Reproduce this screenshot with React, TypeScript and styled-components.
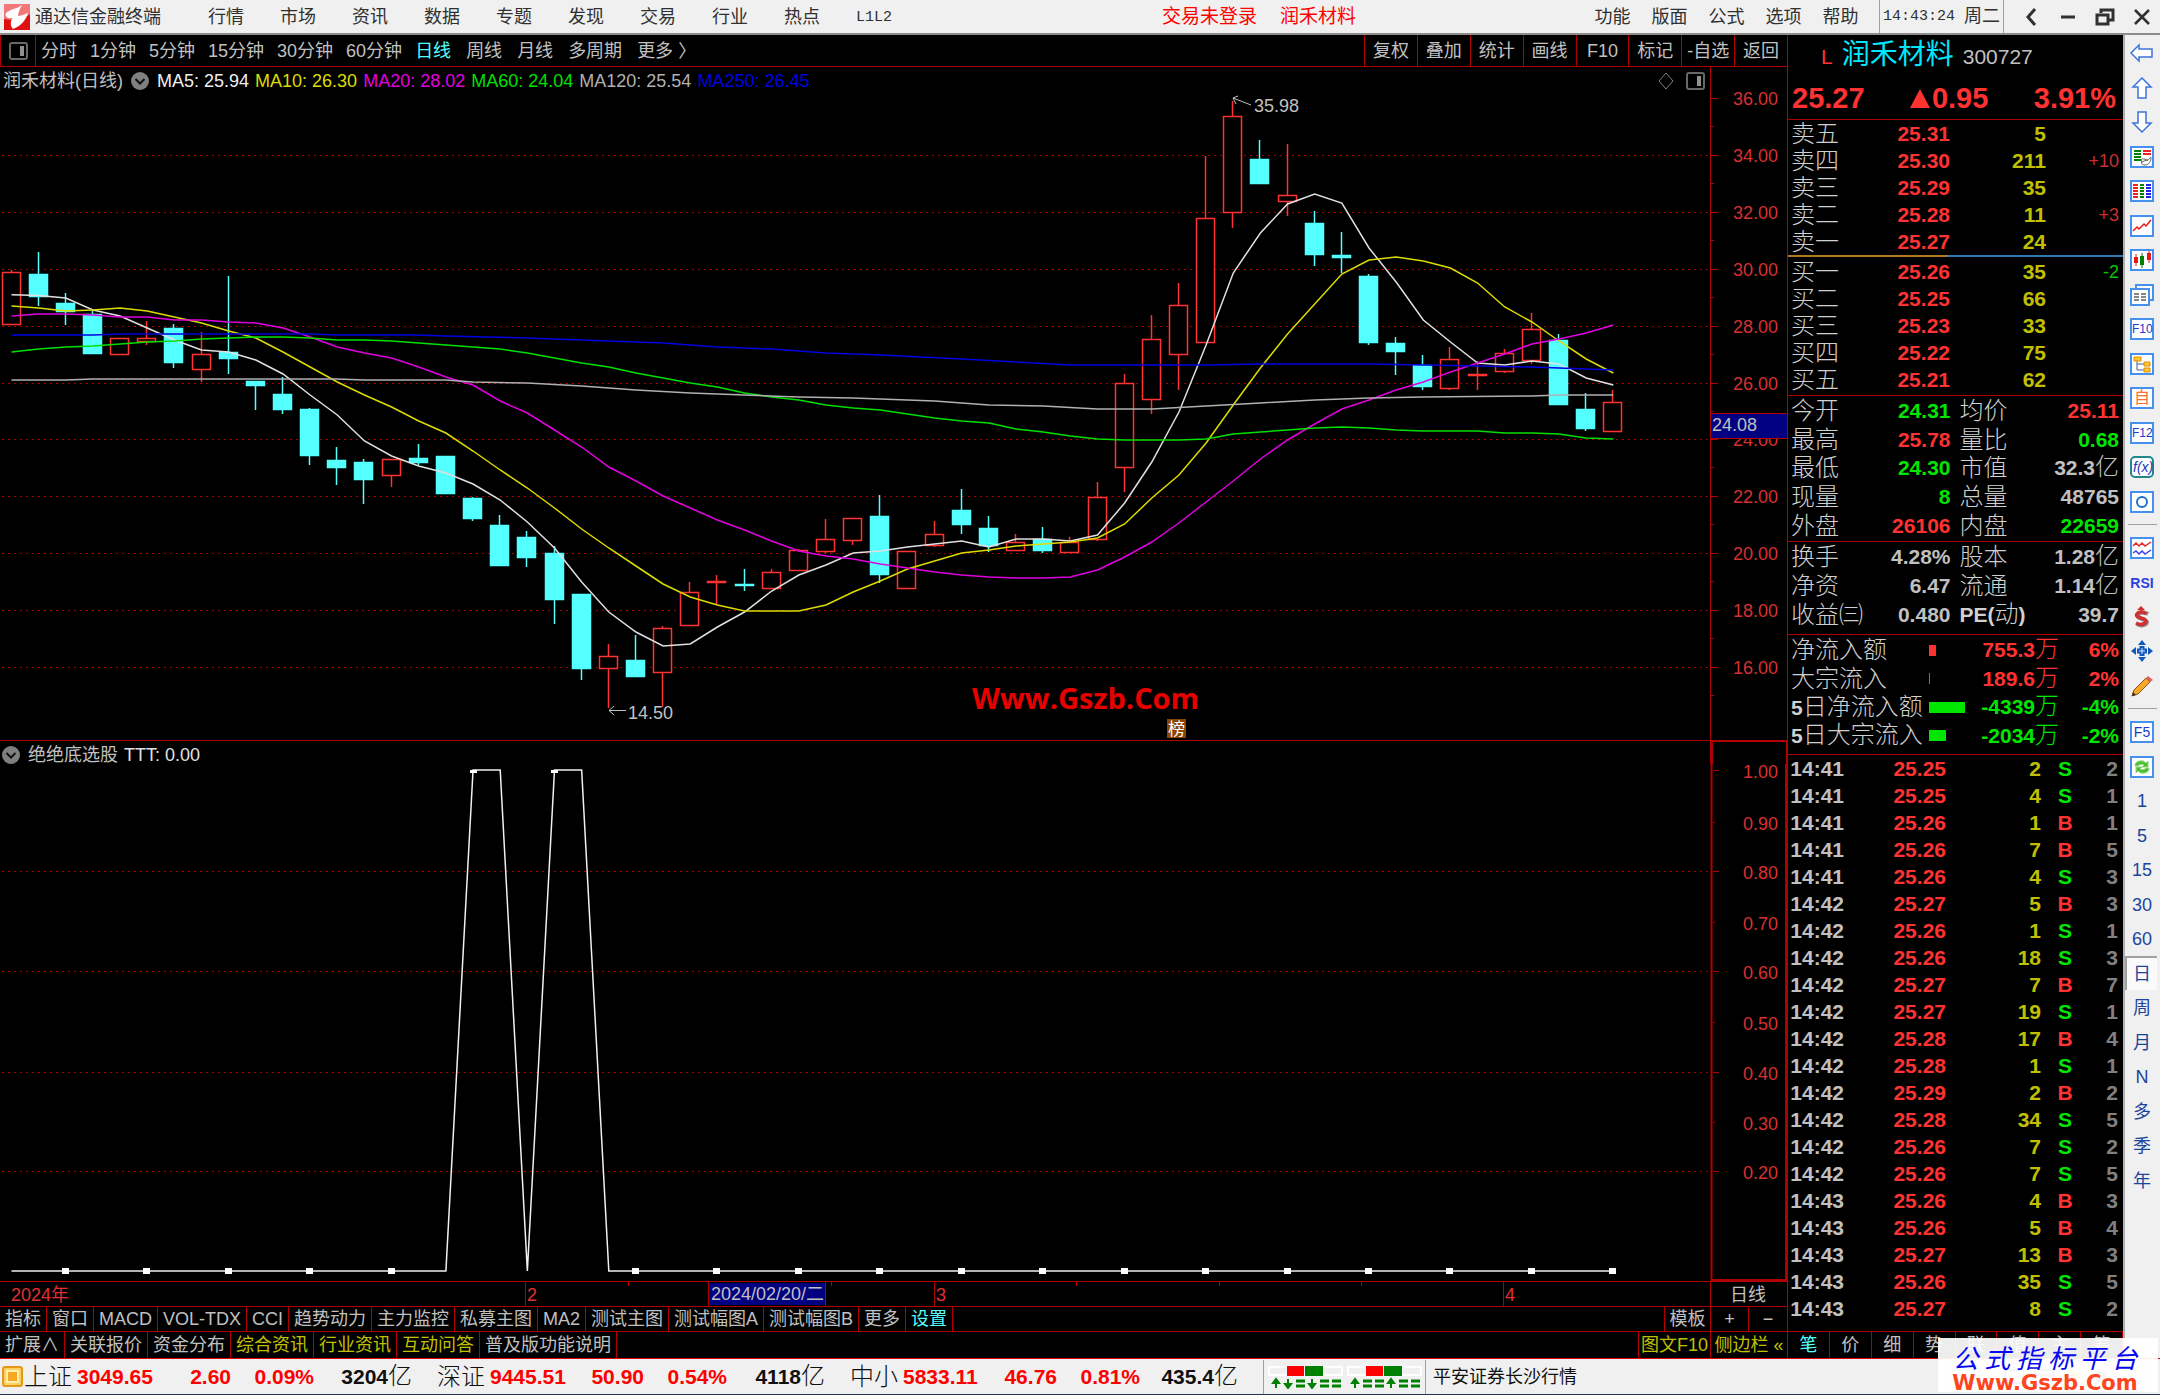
import React from "react";
import styled, { createGlobalStyle } from "styled-components";

const RED = "#b00000";
const UP = "#ff3232";
const DOWN = "#00e600";
const GRAY = "#c0c0c0";
const YELLOW = "#c0c000";
const CYAN = "#54ffff";
const SANS = '"Liberation Sans", "Noto Sans CJK SC", sans-serif';

const Global = createGlobalStyle`
  * { box-sizing: border-box; }
  body { margin: 0; background: #f0f0f0; font-family: ${SANS}; font-size: 18px; font-weight: 400; line-height: 24px; }
  button { font: inherit; color: inherit; background: none; border: 0; padding: 0; margin: 0; white-space: nowrap; cursor: pointer; }
  table { border-collapse: collapse; table-layout: fixed; width: 100%; }
  td, th { padding: 0; font-weight: inherit; }
  dl, dd, dt { margin: 0; }
  svg { display: block; }
  svg text { font-family: ${SANS}; font-size: 18px; }
`;

const Page = styled.div`
  position: relative;
  min-height: 100vh;
  display: flex;
  flex-direction: column;
  border-bottom: 1px solid #203448;
`;

/* ---------- menu bar ---------- */
const MenuBar = styled.header`
  display: flex;
  align-items: center;
  height: 35px;
  background: #f0f0f0;
  border-bottom: 2px solid #8c8c8c;
  color: #303030;
`;
const Brand = styled.div`
  display: flex;
  align-items: center;
  gap: 5px;
  width: 190px;
  padding-left: 4px;
`;
const MenuItem = styled.button<{ $w: number }>`
  width: ${(p) => p.$w}px;
`;
const Mono = styled.span`
  font-family: "Liberation Mono", monospace;
  font-size: 15px;
`;
const Alerts = styled.div`
  display: flex;
  gap: 23px;
  margin-left: 252px;
  margin-right: auto;
  color: #ff0000;
  font-size: 19px;
`;
const Clock = styled.time`
  display: flex;
  gap: 9px;
  height: 33px;
  line-height: 33px;
  width: 125px;
  padding-left: 3px;
  border: solid #a0a0a0;
  border-width: 0 1px;
  margin-left: 10px;
`;
const WinButtons = styled.div`
  display: flex;
  width: 156px;
  padding-left: 8px;
`;
const WinButton = styled.button`
  display: grid;
  place-items: center;
  width: 37px;
  height: 32px;
`;

/* ---------- body ---------- */
const Body = styled.main`
  display: grid;
  grid-template-columns: minmax(0, 1fr) 335px 37px;
  flex: 1;
`;
const Left = styled.section`
  display: flex;
  flex-direction: column;
  background: #000;
  color: ${GRAY};
  border-right: 1px solid ${RED};
  min-width: 0;
`;
const ToolRow = styled.nav`
  display: flex;
  align-items: center;
  height: 32px;
  border-bottom: 1px solid ${RED};
  border-left: 1px solid ${RED};
`;
const PanelToggle = styled.button`
  display: grid;
  place-items: center;
  width: 35px;
  height: 31px;
  border-right: 1px solid ${RED};
`;
const Periods = styled.div<{ $gap: number; $left: number }>`
  display: flex;
  gap: ${(p) => p.$gap}px;
  margin-left: ${(p) => p.$left}px;
`;
const Period = styled.button<{ $on?: boolean }>`
  color: ${(p) => (p.$on ? CYAN : GRAY)};
`;
const Actions = styled.div`
  display: grid;
  grid-template-columns: repeat(8, 1fr);
  width: 423px;
  height: 31px;
  margin-left: auto;
`;
const Action = styled.button`
  border-left: 1px solid ${RED};
`;
const InfoRow = styled.div<{ $thick?: boolean }>`
  display: flex;
  height: ${(p) => (p.$thick ? 24 : 23)}px;
  border-top: ${(p) => (p.$thick ? `1px solid ${RED}` : "0")};
`;
const Info = styled.div<{ $left: number }>`
  flex: 1;
  display: flex;
  align-items: center;
  gap: 6px;
  padding: 4px 5px 0 ${(p) => p.$left}px;
  white-space: nowrap;
`;
const Dropdown = styled.button`
  margin: 0 2px;
`;
const Ink = styled.span<{ $c: string }>`
  color: ${(p) => p.$c};
`;
const InfoIcons = styled.div`
  display: flex;
  gap: 12px;
  margin-left: auto;
`;
const AxisHead = styled.div<{ $thick?: boolean }>`
  width: 77px;
  border: solid ${RED};
  border-width: ${(p) => (p.$thick ? "1px 1px 0 3px" : "0 0 0 1px")};
`;
const Drawing = styled.svg`
  width: 100%;
  height: auto;
  overflow: visible;
`;
const TabRow = styled.nav<{ $h: number }>`
  display: flex;
  height: ${(p) => p.$h}px;
  border-top: 1px solid ${RED};
`;
const Tab = styled.button<{ $c?: string }>`
  padding: 0 5px;
  border-right: 1px solid ${RED};
  color: ${(p) => p.$c || GRAY};
`;
const TabEnd = styled.div<{ $cols: string }>`
  display: grid;
  grid-template-columns: ${(p) => p.$cols};
  margin-left: auto;
`;
const EndTab = styled.button<{ $c?: string }>`
  border-left: 1px solid ${RED};
  color: ${(p) => p.$c || GRAY};
`;

/* ---------- quote panel ---------- */
const Quote = styled.aside`
  display: flex;
  flex-direction: column;
  background: #000;
  color: ${GRAY};
  font-size: 21px;
`;
const QuoteHead = styled.div`
  height: 85px;
  border-bottom: 1px solid ${RED};
`;
const NameRow = styled.h1`
  display: flex;
  align-items: baseline;
  gap: 9px;
  height: 40px;
  margin: 0;
  padding-left: 33px;
  font-size: 21px;
  font-weight: 400;
  line-height: 40px;
`;
const Flag = styled.span`
  color: ${UP};
`;
const Name = styled.span`
  color: #00e6ff;
  font-size: 28px;
`;
const PriceRow = styled.div`
  display: flex;
  justify-content: space-between;
  padding: 11px 7px 0 4px;
  color: ${UP};
  font-size: 29px;
  font-weight: 700;
`;
const Change = styled.span`
  display: flex;
  align-items: center;
  gap: 2px;
`;
const Cell = styled.td<{ $c?: string; $pad?: number; $small?: boolean; $align?: string }>`
  height: 27px;
  line-height: 26px;
  text-align: ${(p) => p.$align || "right"};
  color: ${(p) => p.$c || GRAY};
  padding-right: ${(p) => p.$pad || 0}px;
  font-size: ${(p) => (p.$small ? 18 : 21)}px;
  font-weight: ${(p) => (p.$small ? 400 : 700)};
`;
const LevelName = styled.th`
  height: 27px;
  line-height: 26px;
  padding-left: 3px;
  text-align: left;
  font-size: 24px;
  font-weight: 300;
  color: #d0d0d0;
`;
const Split = styled.div`
  display: grid;
  grid-template-columns: 160px 1fr;
  height: 2px;
  margin-bottom: 1px;
  background: #2c78b4;
  &::before { content: ""; background: #b07820; }
`;
const BookEnd = styled.div`
  height: 3px;
  border-bottom: 1px solid ${RED};
`;
const Sheet = styled.div<{ $rows: number; $h: number; $bottom: number }>`
  display: grid;
  grid-template-rows: repeat(${(p) => p.$rows}, 1fr);
  height: ${(p) => p.$h}px;
  padding: 1px 4px ${(p) => p.$bottom}px 3px;
  border-bottom: 1px solid ${RED};
`;
const SheetRow = styled.dl`
  display: grid;
  grid-template-columns: 1fr 1fr;
  gap: 9px;
  align-items: center;
`;
const Pair = styled.div`
  display: flex;
  justify-content: space-between;
  align-items: center;
  white-space: nowrap;
`;
const Label = styled.dt`
  font-size: 24px;
  font-weight: 300;
  color: #d0d0d0;
`;
const Value = styled.dd<{ $c?: string }>`
  color: ${(p) => p.$c || GRAY};
  font-weight: 700;
`;
const Unit = styled.span`
  font-size: 24px;
  font-weight: 300;
  line-height: 0;
`;
const Digit = styled.span`
  font-size: 21px;
  font-weight: 700;
`;
const FlowRow = styled.dl`
  display: grid;
  grid-template-columns: 138px 36px 1fr 60px;
  align-items: center;
  white-space: nowrap;
`;
const FlowBar = styled.dd<{ $c: string }>`
  height: 11px;
  background: ${(p) => p.$c};
`;
const FlowValue = styled(Value)`
  text-align: right;
`;
const TickTabs = styled.nav`
  display: grid;
  grid-template-columns: repeat(8, 1fr);
  height: 27px;
  margin-top: auto;
  border-top: 1px solid ${RED};
  font-size: 18px;
`;
const TickTab = styled.button<{ $on?: boolean }>`
  border-right: 1px solid ${RED};
  color: ${(p) => (p.$on ? CYAN : GRAY)};
`;

/* ---------- tool strip ---------- */
const Strip = styled.nav`
  background: #f0f0f0;
  border-left: 2px solid #b0b0b0;
  color: #1c449c;
`;
const StripGroup = styled.div<{ $h: number }>`
  display: grid;
  grid-auto-rows: 1fr;
  height: ${(p) => p.$h}px;
`;
const StripButton = styled.button<{ $on?: boolean }>`
  display: grid;
  place-items: center;
  margin: 0 3px 0 0;
  background: ${(p) => (p.$on ? "#fafafa" : "none")};
  border: solid ${(p) => (p.$on ? "#a0a0a0" : "transparent")};
  border-width: 2px 0 0 2px;
`;
const StripLine = styled.hr`
  height: 12px;
  margin: 0 3px;
  border: 0;
  background: linear-gradient(#a0a0a0, #a0a0a0) center / 100% 1px no-repeat;
`;
const Boxed = styled.span<{ $c?: string; $size?: number }>`
  display: grid;
  place-items: center;
  width: 24px;
  height: 22px;
  border: 2px solid #4690f0;
  background: #fff;
  color: ${(p) => p.$c || "#2038d0"};
  font-size: ${(p) => p.$size || 12}px;
  line-height: 16px;
`;
const Rsi = styled.b`
  font-size: 14px;
  color: #2c40e0;
`;

/* ---------- status bar ---------- */
const Status = styled.footer`
  display: flex;
  align-items: center;
  height: 36px;
  border-top: 1px solid #e00000;
  background: #f0f0f0;
  color: #101010;
  padding-left: 2px;
`;
const Index = styled.div`
  display: grid;
  grid-template-columns: 53px 80px 74px 83px 98px;
  align-items: center;
  width: 413px;
  font-size: 21px;
  font-weight: 700;
  text-align: right;
  white-space: nowrap;
`;
const IndexName = styled.span`
  font-size: 24px;
  font-weight: 300;
  text-align: left;
`;
const IndexValue = styled.span`
  color: #ff0000;
  text-align: left;
`;
const Signals = styled.div`
  display: flex;
  align-items: center;
  gap: 2px;
  height: 34px;
  width: 163px;
  padding-left: 3px;
  margin-right: 7px;
  border: solid #a0a0a0;
  border-width: 0 1px;
`;
const Tray = styled.div`
  display: flex;
  gap: 10px;
  margin-left: auto;
  padding-right: 50px;
`;
const Stamp = styled.div`
  position: absolute;
  right: 2px;
  bottom: 2px;
  width: 220px;
  height: 54px;
  padding-right: 6px;
  background: rgba(255, 255, 255, 0.93);
  text-align: center;
  white-space: nowrap;
`;
const StampTitle = styled.div`
  height: 34px;
  line-height: 38px;
  font-family: "Noto Sans CJK SC", sans-serif;
  font-size: 26px;
  font-style: italic;
  color: #0808f0;
`;
const StampUrl = styled.div`
  height: 20px;
  line-height: 22px;
  font-family: "DejaVu Sans", sans-serif;
  font-size: 21px;
  font-weight: 700;
  color: #ff4420;
`;

/* ---------- chart data: [rising, bodyTop, bodyBottom, high, low] ---------- */
const candles: number[][] = [
  [1,272,325,270,325],[0,274,297,252,306],[0,303,312,293,325],[0,314,354,311,354],[1,338,355,338,355],[1,338,342,321,345],
  [0,328,363,324,368],[1,354,370,332,382],[0,352,359,276,374],[0,381,386,381,410],[0,394,410,377,414],[0,409,456,408,465],
  [0,460,468,447,485],[0,462,480,459,504],[1,459,476,459,487],[0,458,463,444,465],[0,456,494,456,494],[0,498,519,497,521],
  [0,525,566,515,566],[0,537,558,531,567],[0,553,600,546,624],[0,594,669,594,680],[1,656,669,644,708],[0,660,677,635,677],
  [1,628,673,626,707],[1,592,626,582,626],[1,581,583,575,604],[0,584,586,569,591],[1,572,589,569,589],[1,550,571,549,571],
  [1,539,552,519,553],[1,518,541,518,545],[0,516,575,495,583],[1,551,589,551,589],[1,534,546,521,547],[0,510,525,489,534],
  [0,528,546,516,552],[1,542,551,534,551],[0,539,551,527,553],[1,542,553,537,553],[1,497,540,482,541],[1,383,468,374,492],
  [1,339,400,315,414],[1,305,355,283,390],[1,218,343,156,343],[1,116,213,101,228],[0,159,184,140,184],[1,195,202,144,216],
  [0,223,255,211,266],[0,255,258,232,273],[0,276,343,274,345],[0,343,352,337,375],[0,365,387,355,390],[1,359,389,347,390],
  [1,374,375,361,390],[1,353,372,349,373],[1,329,361,313,364],[0,340,405,334,405],[0,409,429,393,431],[1,402,432,390,432],
];
const px = (i: number) => 11.5 + 27.15 * i;

const ma5 = [294.7,295.5,298,310,316,328,340,350,352,360,374,395,415,441,456,466,473,484,500,522,548,582,612,632,646,644,627,612,591,575,565,553,551,547,544,541,547,539,539,541,535,503,462,412,345,273,233,204,194,203,248,282,320,342,363,365,361,364,378,385];
const ma10 = [306,308,311,310,308,311,317,323,331,338,352,367,382,395,407,421,433,451,470,488,508,529,548,566,584,597,605,611,611,611,605,592,581,569,561,553,550,546,544,542,538,524,498,475,443,405,368,334,304,274,260,257,261,268,283,307,322,341,359,373];
const ma20 = [316,314,314,315,317,317,320,320,322,323,328,337,347,353,358,367,377,385,401,413,430,447,467,481,496,508,520,530,541,551,556,559,564,568,572,575,577,578,578,577,570,557,542,523,502,481,459,440,424,409,400,390,382,372,363,354,344,339,333,325];
const ma60 = [352,349,347,346,344,342,341,339,338,337,337,338,340,340,341,343,345,347,349,353,358,363,367,373,378,383,387,393,397,400,405,408,410,414,418,421,423,429,432,436,439,440,440,440,439,434,432,430,428,427,428,430,431,431,431,433,433,434,438,439];
const ma120: number[][] = [[0,380],[2,380],[3,379],[12,379],[13,380],[16,380],[17,382],[19,383],[21,386],[23,390],[25,393],[27,395],[29,397],[31,398],[34,401],[36,405],[38,406],[40,409],[42,409],[44,406],[46,403],[48,400],[50,398],[52,397],[56,396],[57,395],[59,395]];
const ma250: number[][] = [[0,335],[3,335],[4,334],[11,334],[12,335],[15,335],[16,336],[19,338],[21,340],[24,343],[26,347],[28,349],[30,353],[32,355],[35,359],[37,362],[39,365],[44,365],[46,364],[50,364],[52,365],[54,366],[56,367],[58,369],[59,370]];

const curve = (pts: number[][]) => pts.map(([i, y]) => `${px(i)},${y}`).join(" ");
const dense = (ys: number[]) => ys.map((y, i) => [i, y]);
const Curve = ({ pts, c }: { pts: number[][]; c: string }) => (
  <polyline points={curve(pts)} fill="none" stroke={c} strokeWidth="1.5" />
);

const priceTicks = [36, 34, 32, 30, 28, 26, 24, 22, 20, 18, 16].map((p, i) => ({ p, y: Math.round(98 + i * 56.9) }));

const PriceChart = () => (
  <Drawing viewBox="0 90 1787 650">
    {priceTicks.map(({ p, y }) => (
      <g key={p}>
        {p < 36 && <line x1="2" x2="1710" y1={y + 0.5} y2={y + 0.5} stroke="#a80000" strokeDasharray="2 4" />}
        <line x1="1710" x2="1718" y1={y + 0.5} y2={y + 0.5} stroke={RED} />
        <line x1="1710" x2="1714" y1={y + 28.5} y2={y + 28.5} stroke={RED} />
        <text x="1778" y={y + 7} textAnchor="end" fill="#d83030">{p.toFixed(2)}</text>
      </g>
    ))}
    <line x1="1710.5" x2="1710.5" y1="90" y2="740" stroke={RED} />
    {candles.map(([up, top, bottom, high, low], i) => {
      const x = Math.round(px(i));
      return (
        <g key={i} stroke={up ? UP : CYAN}>
          <line x1={x - 0.5} x2={x - 0.5} y1={high} y2={low} strokeWidth="1.5" />
          <rect x={x - 9.5} y={top + 0.5} width="18" height={Math.max(bottom - top - 1, 1)} fill={up ? (bottom - top < 3 ? UP : "#000") : CYAN} strokeWidth="1.5" />
        </g>
      );
    })}
    <Curve pts={dense(ma5)} c="#e0e0e0" />
    <Curve pts={dense(ma10)} c="#dcdc00" />
    <Curve pts={dense(ma20)} c="#e000e0" />
    <Curve pts={dense(ma60)} c="#00e000" />
    <Curve pts={ma120} c="#b0b0b0" />
    <Curve pts={ma250} c="#0000e0" />
    <g stroke={GRAY} fill="none">
      <path d="M1251 105 1233 98M1238 96 1233 98 1236 104" />
      <path d="M626 710.5H609M614 706 609 710.5 614 715" />
    </g>
    <text x="1254" y="112" fill={GRAY}>35.98</text>
    <text x="628" y="719" fill={GRAY}>14.50</text>
    <text x="972" y="709" fill="#e60000" style={{ fontFamily: '"Open Sans"', fontWeight: 700, fontSize: 29 }}>Www.Gszb.Com</text>
    <rect x="1167" y="719" width="19" height="19" fill="#884400" />
    <text x="1168" y="735" fill="#fff" style={{ fontSize: 17 }}>榜</text>
    <rect x="1711" y="413" width="76" height="25" fill="#000080" />
    <path d="M1711 413.5h76M1711 438.5h76" stroke={RED} />
    <text x="1712" y="431" fill={GRAY}>24.08</text>
  </Drawing>
);

const subTicks = [[1, 770], [0.9, 822], [0.8, 871], [0.7, 922], [0.6, 971], [0.5, 1022], [0.4, 1072], [0.3, 1122], [0.2, 1171]];
const marks = [2, 5, 8, 11, 14, 23, 26, 29, 32, 35, 38, 41, 44, 47, 50, 53, 56, 59];
const signal = [[0, 1271], [16, 1271], [17, 770], [18, 770], [19, 1271], [20, 770], [21, 770], [22, 1271], [59, 1271]];

const IndicatorChart = () => (
  <Drawing viewBox="0 764 1787 517">
    {subTicks.map(([v, y], i) => (
      <g key={v}>
        {i > 0 && i % 2 === 0 && <line x1="2" x2="1710" y1={y + 0.5} y2={y + 0.5} stroke="#a80000" strokeDasharray="2 4" />}
        <line x1="1713" x2={i % 2 ? 1715 : 1719} y1={y + 0.5} y2={y + 0.5} stroke={RED} />
        <text x="1778" y={y + 8} textAnchor="end" fill="#d83030">{v.toFixed(2)}</text>
      </g>
    ))}
    <path d="M1711.5 764V1280H1786V764" fill="none" stroke={RED} strokeWidth="2" />
    <Curve pts={signal} c="#f0f0f0" />
    {marks.map((i) => <rect key={i} x={Math.round(px(i)) - 4} y="1268" width="7" height="6" fill="#fff" />)}
    <path d="M470 770h7v3h-7zM551 770h7v3h-7z" fill="#fff" />
  </Drawing>
);

const DateAxis = () => (
  <Drawing viewBox="0 1281 1787 25">
    <path d="M0 1281.5H1787M525.5 1282V1306M934.5 1282V1306M1503.5 1282V1306M1710.5 1282V1306M628.5 1282v4M831.5 1282v4M1076.5 1282v4M1219.5 1282v4M1361.5 1282v4" stroke={RED} />
    <rect x="709" y="1283" width="116" height="22" fill="#000080" />
    <path d="M708.5 1282V1306M825.5 1282V1306" stroke={RED} />
    <g fill="#e03030">
      <text x="11" y="1301">2024年</text>
      <text x="527" y="1301">2</text>
      <text x="936" y="1301">3</text>
      <text x="1505" y="1301">4</text>
    </g>
    <text x="711" y="1300" fill={GRAY}>2024/02/20/二</text>
    <text x="1730" y="1301" fill={GRAY}>日线</text>
  </Drawing>
);

const PanelIcon = () => (
  <svg width="19" height="18" viewBox="0 0 19 18">
    <rect x="1" y="1" width="17" height="16" rx="2" fill="none" stroke="#686868" strokeWidth="2" />
    <rect x="11" y="4" width="4" height="10" fill="#909090" />
  </svg>
);
const ChevronIcon = () => (
  <svg width="18" height="18" viewBox="0 0 18 18">
    <circle cx="9" cy="9" r="9" fill="#808080" />
    <path d="M4.500 7 9 11.500 13.500 7" fill="none" stroke="#101010" strokeWidth="2" />
  </svg>
);

/* ---------- strip icons, each on a 24x22 grid ---------- */
const frame = <rect x="1" y="1" width="22" height="20" fill="#fff" stroke="#4690f0" strokeWidth="2" />;
const arrow = { fill: "#fff", stroke: "#3c74dc", strokeWidth: 1.5 };
const I = ({ children }: { children: React.ReactNode }) => <svg width="24" height="22" viewBox="0 0 24 22">{children}</svg>;

const chartTools: [string, React.ReactNode][] = [
  ["后退", <I><path d="M1 11 9 3V7H22V15H9V19Z" {...arrow} /></I>],
  ["上移", <I><path d="M12 1 21 10H16V21H8V10H3Z" {...arrow} /></I>],
  ["下移", <I><path d="M12 21 21 12H16V1H8V12H3Z" {...arrow} /></I>],
  ["报价", <I>{frame}<path d="M4 5h7M4 8h7M4 11h7M4 14h7" stroke="#008000" strokeWidth="2" /><path d="M13 5h8M13 8h8" stroke="#f02020" strokeWidth="2" /><path d="M12 17c-3-6 3-4 5-3s4-5 4-2-2 7-6 7-5-3-1-4l4-1" fill="#fff" stroke="#606060" /></I>],
  ["列表", <I>{frame}<path d="M3 5h5M3 8h5M3 11h5M3 14h5M3 17h5" stroke="#f02020" strokeWidth="2" /><path d="M10 5h4M10 8h4M10 11h4M10 14h4M10 17h4" stroke="#008000" strokeWidth="2" /><path d="M16 5h5M16 8h5M16 11h5M16 14h5M16 17h5" stroke="#2020f0" strokeWidth="2" /></I>],
  ["走势", <I>{frame}<path d="M3 16 7 12 9 14 14 9 16 11 21 5" fill="none" stroke="#e81818" strokeWidth="1.5" /></I>],
  ["K线", <I>{frame}<path d="M6 5v12M19 2v12" stroke="#e81818" /><path d="M4 8h4v6H4zM17 4h4v7h-4z" fill="#e81818" /><path d="M12 4v15" stroke="#008000" /><path d="M10 7h4v9h-4z" fill="#008000" /></I>],
  ["多股", <I><path d="M6 1H23V16H6Z" fill="#fff" stroke="#4690f0" strokeWidth="2" /><path d="M1 5H19V21H1Z" fill="#fff" stroke="#4690f0" strokeWidth="2" /><path d="M4 10h5M4 13h5M4 16h5M11 10h5M11 13h5M11 16h5" stroke="#606060" strokeWidth="1.5" /></I>],
  ["F10", <Boxed>F10</Boxed>],
  ["板块", <I>{frame}<path d="M7 7V17H14M7 11H14" fill="none" stroke="#406090" /><path d="M4 4h7v4H4zM14 9h6v4h-6zM14 15h6v4h-6z" fill="#ffc830" stroke="#e09000" /></I>],
  ["自选", <Boxed $c="#ff7030" $size={16}>自</Boxed>],
  ["F12", <Boxed>F12</Boxed>],
  ["公式", <I><rect x="1" y="1" width="22" height="20" rx="4" fill="#fff" stroke="#208888" strokeWidth="2" /><text x="3" y="16" style={{ fontSize: 14, fontStyle: "italic" }} fill="#2038c0">f(x)</text></I>],
  ["圆", <I>{frame}<circle cx="12" cy="11" r="5" fill="none" stroke="#2070d0" strokeWidth="2" /></I>],
];
const drawTools: [string, React.ReactNode][] = [
  ["叠加", <I>{frame}<path d="M3 9 6 6 9 9 12 6 15 9 21 5" fill="none" stroke="#e82828" strokeWidth="1.5" /><path d="M3 16 6 14 9 17 12 14 15 17 21 13" fill="none" stroke="#4040f0" strokeWidth="1.5" /></I>],
  ["RSI", <Rsi>RSI</Rsi>],
  ["交易", <I><path d="M17 7Q12 4 8 7T11 12T15 17Q11 20 6 17" fill="none" stroke="#888" strokeWidth="4" transform="translate(1 1)" /><path d="M16 8Q12 4 8 7T11 12T15 17Q11 20 6 17" fill="none" stroke="#d03030" strokeWidth="3.500" /><path d="M7 4 11 0 15 4Z" fill="#d03030" /></I>],
  ["移动", <I><path d="M12 0 16 5H8ZM12 22 8 17H16ZM1 11 6 7V15ZM23 11 18 15V7Z" fill="#1058c0" /><path d="M12 6v10M7 11h10" stroke="#1058c0" strokeWidth="5" /><path d="M12 8v6M9 11h6" stroke="#e0e8ff" /></I>],
  ["画笔", <I><path d="M2 21 4 15 16 3 20 7 8 19Z" fill="#f8a828" stroke="#905010" /><path d="M16 3 18 1 23 5 20 7Z" fill="#e06060" /><path d="M2 21 3 17 6 20Z" fill="#303030" /></I>],
];
const cycleTools: [string, React.ReactNode][] = [
  ["F5", <Boxed $size={14}>F5</Boxed>],
  ["刷新", <I>{frame}<path d="M5 10a6 5 0 0 1 11-3l2-2v6h-6l2-2a4 3 0 0 0-6 1ZM19 12a6 5 0 0 1-11 3l-2 2v-6h6l-2 2a4 3 0 0 0 6-1Z" fill="#50c030" stroke="#90d880" /></I>],
  ...["1", "5", "15", "30", "60", "日", "周", "月", "N", "多", "季", "年"].map((t) => [t, t] as [string, React.ReactNode]),
];

const ToolGroup = ({ tools, h }: { tools: [string, React.ReactNode][]; h: number }) => (
  <StripGroup $h={h}>
    {tools.map(([name, icon]) => <StripButton key={name} aria-label={name} $on={name === "日"}>{icon}</StripButton>)}
  </StripGroup>
);

/* ---------- quote data ---------- */
const asks = [["卖五", "25.31", "5", ""], ["卖四", "25.30", "211", "+10"], ["卖三", "25.29", "35", ""], ["卖二", "25.28", "11", "+3"], ["卖一", "25.27", "24", ""]];
const bids = [["买一", "25.26", "35", "-2"], ["买二", "25.25", "66", ""], ["买三", "25.23", "33", ""], ["买四", "25.22", "75", ""], ["买五", "25.21", "62", ""]];

const Levels = ({ rows }: { rows: string[][] }) => (
  <table>
    <colgroup><col width="82" /><col width="80" /><col width="96" /><col width="77" /></colgroup>
    <tbody>
      {rows.map(([n, p, v, d]) => (
        <tr key={n}>
          <LevelName scope="row">{n}</LevelName>
          <Cell $c={UP}>{p}</Cell>
          <Cell $c={YELLOW}>{v}</Cell>
          <Cell $c={d[0] === "-" ? "#00c800" : "#c83030"} $pad={4} $small>{d}</Cell>
        </tr>
      ))}
    </tbody>
  </table>
);

type Stat = [string, string, string?, string?];
const basics: Stat[][] = [
  [["今开", "24.31", DOWN], ["均价", "25.11", UP]],
  [["最高", "25.78", UP], ["量比", "0.68", DOWN]],
  [["最低", "24.30", DOWN], ["市值", "32.3", GRAY, "亿"]],
  [["现量", "8", DOWN], ["总量", "48765"]],
  [["外盘", "26106", UP], ["内盘", "22659", DOWN]],
];
const finance: Stat[][] = [
  [["换手", "4.28%"], ["股本", "1.28", GRAY, "亿"]],
  [["净资", "6.47"], ["流通", "1.14", GRAY, "亿"]],
  [["收益㈢", "0.480"], ["PE(动)", "39.7"]],
];
const Stats = ({ rows }: { rows: Stat[][] }) => (
  <>
    {rows.map((r) => (
      <SheetRow key={r[0][0]}>
        {r.map(([k, v, c, u]) => (
          <Pair key={k}>
            <Label>{k[0] === "P" ? <><Digit>PE(</Digit>动<Digit>)</Digit></> : k}</Label>
            <Value $c={c}>{v}{u && <Unit>{u}</Unit>}</Value>
          </Pair>
        ))}
      </SheetRow>
    ))}
  </>
);

const flows: [string, string, number, string, string, string][] = [
  ["", "净流入额", 7, "755.3", "6%", UP],
  ["", "大宗流入", 1, "189.6", "2%", UP],
  ["5", "日净流入额", 36, "-4339", "-4%", DOWN],
  ["5", "日大宗流入", 17, "-2034", "-2%", DOWN],
];

const trades = `14:41 25.25 2 S 2
14:41 25.25 4 S 1
14:41 25.26 1 B 1
14:41 25.26 7 B 5
14:41 25.26 4 S 3
14:42 25.27 5 B 3
14:42 25.26 1 S 1
14:42 25.26 18 S 3
14:42 25.27 7 B 7
14:42 25.27 19 S 1
14:42 25.28 17 B 4
14:42 25.28 1 S 1
14:42 25.29 2 B 2
14:42 25.28 34 S 5
14:42 25.26 7 S 2
14:42 25.26 7 S 5
14:43 25.26 4 B 3
14:43 25.26 5 B 4
14:43 25.27 13 B 3
14:43 25.26 35 S 5
14:43 25.27 8 S 2`.split("\n").map((l) => l.split(" "));

const indices = [
  ["上证", "3049.65", "2.60", "0.09%", "3204"],
  ["深证", "9445.51", "50.90", "0.54%", "4118"],
  ["中小", "5833.11", "46.76", "0.81%", "435.4"],
];

const SignalIcon = ({ pattern }: { pattern: string }) => (
  <svg width="77" height="24" viewBox="0 0 77 24">
    <path d="M2 2h73v8h-73z" fill="#f0f0f0" stroke="#fff" strokeWidth="2" />
    <path d="M20 1h17v10h-17z" fill="#ff0000" />
    <path d="M38 1h18v10h-18z" fill="#008000" />
    {pattern.split("").map((ch, i) => (
      <g key={i} transform={`translate(${4 + i * 12} 13)`} stroke="#008000" strokeWidth="2" fill="#008000">
        {ch === "=" ? <path d="M1 3h9M1 8h9" strokeWidth="3" /> : ch === "u" ? <path d="M5 10V2M2 5 5 1 8 5Z" /> : <path d="M5 1V9M2 6 5 10 8 6Z" />}
      </g>
    ))}
  </svg>
);

export default function App() {
  return (
    <Page>
      <Global />
      <MenuBar>
        <Brand>
          <svg width="26" height="26" viewBox="0 0 26 26">
            <rect width="26" height="26" fill="#e01010" />
            <path d="M0 0H26V10L17 17 0 15Z" fill="#f07878" />
            <path d="M18 1C13 5 6 5 2 9 0 13 5 15 9 14 6 17 6 22 9 25 17 22 22 16 24 9 20 11 16 12 14 12 14 8 16 5 18 1Z" fill="#fff" />
          </svg>
          通达信金融终端
        </Brand>
        {["行情", "市场", "资讯", "数据", "专题", "发现", "交易", "行业", "热点"].map((t) => <MenuItem key={t} $w={72}>{t}</MenuItem>)}
        <MenuItem $w={72}><Mono>L1L2</Mono></MenuItem>
        <Alerts><span>交易未登录</span><span>润禾材料</span></Alerts>
        {["功能", "版面", "公式", "选项", "帮助"].map((t) => <MenuItem key={t} $w={57}>{t}</MenuItem>)}
        <Clock><Mono>14:43:24</Mono>周二</Clock>
        <WinButtons>
          <WinButton aria-label="收起"><svg width="12" height="18" viewBox="0 0 12 18"><path d="M10 1 3 9 10 17" fill="none" stroke="#303030" strokeWidth="3" /></svg></WinButton>
          <WinButton aria-label="最小化"><svg width="14" height="18" viewBox="0 0 14 18"><path d="M0 9h14" stroke="#303030" strokeWidth="3" /></svg></WinButton>
          <WinButton aria-label="还原"><svg width="20" height="18" viewBox="0 0 20 18"><path d="M6 5V2H18V12H14M2 7H13V16H2Z" fill="none" stroke="#303030" strokeWidth="3" /></svg></WinButton>
          <WinButton aria-label="关闭"><svg width="18" height="18" viewBox="0 0 18 18"><path d="M2 2 16 16M16 2 2 16" stroke="#303030" strokeWidth="2.500" /></svg></WinButton>
        </WinButtons>
      </MenuBar>

      <Body>
        <Left>
          <ToolRow>
            <PanelToggle aria-label="侧栏"><PanelIcon /></PanelToggle>
            <Periods $gap={13} $left={5}>
              {["分时", "1分钟", "5分钟", "15分钟", "30分钟", "60分钟"].map((t) => <Period key={t}>{t}</Period>)}
            </Periods>
            <Periods $gap={15} $left={13}>
              {["日线", "周线", "月线", "多周期", "更多 〉"].map((t) => <Period key={t} $on={t === "日线"}>{t}</Period>)}
            </Periods>
            <Actions>
              {["复权", "叠加", "统计", "画线", "F10", "标记", "-自选", "返回"].map((t) => <Action key={t}>{t}</Action>)}
            </Actions>
          </ToolRow>

          <InfoRow>
            <Info $left={3}>
              <span>润禾材料(日线)</span>
              <Dropdown aria-label="指标菜单"><ChevronIcon /></Dropdown>
              <Ink $c="#f0f0f0">MA5: 25.94</Ink>
              <Ink $c="#dcdc00">MA10: 26.30</Ink>
              <Ink $c="#e000e0">MA20: 28.02</Ink>
              <Ink $c="#00e000">MA60: 24.04</Ink>
              <Ink $c="#b0b0b0">MA120: 25.54</Ink>
              <Ink $c="#0000e0">MA250: 26.45</Ink>
              <InfoIcons>
                <svg width="16" height="18" viewBox="0 0 16 18"><path d="M8 1 15 9 8 17 1 9Z" fill="none" stroke="#808080" /></svg>
                <PanelIcon />
              </InfoIcons>
            </Info>
            <AxisHead />
          </InfoRow>
          <PriceChart />
          <InfoRow $thick>
            <Info $left={0}>
              <Dropdown aria-label="副图菜单"><ChevronIcon /></Dropdown>
              <span>绝绝底选股</span>
              <Ink $c="#e0e0e0">TTT: 0.00</Ink>
            </Info>
            <AxisHead $thick />
          </InfoRow>
          <IndicatorChart />
          <DateAxis />
          <TabRow $h={25}>
            {["指标", "窗口", "MACD", "VOL-TDX", "CCI", "趋势动力", "主力监控", "私募主图", "MA2", "测试主图", "测试幅图A", "测试幅图B", "更多", "设置"].map((t) => (
              <Tab key={t} $c={t === "设置" ? CYAN : undefined}>{t}</Tab>
            ))}
            <TabEnd $cols="46px 38px 39px"><EndTab>模板</EndTab><EndTab>+</EndTab><EndTab>−</EndTab></TabEnd>
          </TabRow>
          <TabRow $h={27}>
            {["扩展∧", "关联报价", "资金分布", "综合资讯", "行业资讯", "互动问答", "普及版功能说明"].map((t, i) => (
              <Tab key={t} $c={i > 2 && i < 6 ? YELLOW : undefined}>{t}</Tab>
            ))}
            <TabEnd $cols="72px 77px"><EndTab $c={YELLOW}>图文F10</EndTab><EndTab $c={YELLOW}>侧边栏 «</EndTab></TabEnd>
          </TabRow>
        </Left>

        <Quote>
          <QuoteHead>
            <NameRow><Flag>L</Flag><Name>润禾材料</Name>300727</NameRow>
            <PriceRow>
              <span>25.27</span>
              <Change><svg width="20" height="19" viewBox="0 0 20 19"><path d="M10 0 20 19H0Z" fill={UP} /></svg>0.95</Change>
              <span>3.91%</span>
            </PriceRow>
          </QuoteHead>
          <Levels rows={asks} />
          <Split />
          <Levels rows={bids} />
          <BookEnd />
          <Sheet $rows={5} $h={146} $bottom={1}><Stats rows={basics} /></Sheet>
          <Sheet $rows={3} $h={93} $bottom={5}><Stats rows={finance} /></Sheet>
          <Sheet $rows={4} $h={120} $bottom={4}>
            {flows.map(([pre, name, w, v, pct, c]) => (
              <FlowRow key={name}>
                <Label>{pre && <Digit>{pre}</Digit>}{name}</Label>
                <FlowBar $c={c} style={{ width: w }} />
                <FlowValue $c={c}>{v}<Unit>万</Unit></FlowValue>
                <FlowValue $c={c}>{pct}</FlowValue>
              </FlowRow>
            ))}
          </Sheet>
          <table>
            <colgroup><col width="78" /><col width="80" /><col width="95" /><col width="48" /><col width="34" /></colgroup>
            <tbody>
              {trades.map(([t, p, v, s, n], i) => (
                <tr key={i}>
                  <Cell $pad={22}>{t}</Cell>
                  <Cell $c={UP}>{p}</Cell>
                  <Cell $c={YELLOW}>{v}</Cell>
                  <Cell $c={s === "S" ? DOWN : UP} $align="center">{s}</Cell>
                  <Cell $c="#808080" $pad={5}>{n}</Cell>
                </tr>
              ))}
            </tbody>
          </table>
          <TickTabs>
            {["笔", "价", "细", "势", "联", "值", "主", "筹"].map((t, i) => <TickTab key={t} $on={i === 0}>{t}</TickTab>)}
          </TickTabs>
        </Quote>

        <Strip>
          <ToolGroup tools={chartTools} h={483} />
          <StripLine />
          <ToolGroup tools={drawTools} h={172} />
          <StripLine />
          <ToolGroup tools={cycleTools} h={483} />
        </Strip>
      </Body>

      <Status>
        <svg width="22" height="22" viewBox="0 0 22 22">
          <rect x="1" y="1" width="19" height="19" rx="2" fill="#ffd060" stroke="#e89818" strokeWidth="2" />
          <rect x="4" y="4" width="13" height="13" fill="#fff0b0" />
          <rect x="6" y="6" width="9" height="9" fill="#f8a820" />
        </svg>
        {indices.map(([n, p, c, r, v]) => (
          <Index key={n}>
            <IndexName>{n}</IndexName>
            <IndexValue>{p}</IndexValue>
            <Ink $c="#ff0000">{c}</Ink>
            <Ink $c="#ff0000">{r}</Ink>
            <span>{v}<Unit>亿</Unit></span>
          </Index>
        ))}
        <Signals>
          <SignalIcon pattern="ud=d==" />
          <SignalIcon pattern="u==u==" />
        </Signals>
        平安证券长沙行情
        <Tray>
          <svg width="20" height="16" viewBox="0 0 20 16"><rect x="1" y="1" width="18" height="13" fill="none" stroke="#4060e0" strokeWidth="2" /></svg>
          <svg width="20" height="16" viewBox="0 0 20 16"><path d="M1 1h18v14H1zM1 6h18" fill="none" stroke="#808080" strokeWidth="2" /></svg>
          <svg width="18" height="16" viewBox="0 0 18 16"><circle cx="9" cy="8" r="7" fill="#f0d020" /></svg>
          <svg width="18" height="16" viewBox="0 0 18 16"><circle cx="9" cy="8" r="6" fill="#606060" /></svg>
        </Tray>
      </Status>
      <Stamp>
        <StampTitle>公 式 指 标 平 台</StampTitle>
        <StampUrl>Www.Gszb.Com</StampUrl>
      </Stamp>
    </Page>
  );
}
